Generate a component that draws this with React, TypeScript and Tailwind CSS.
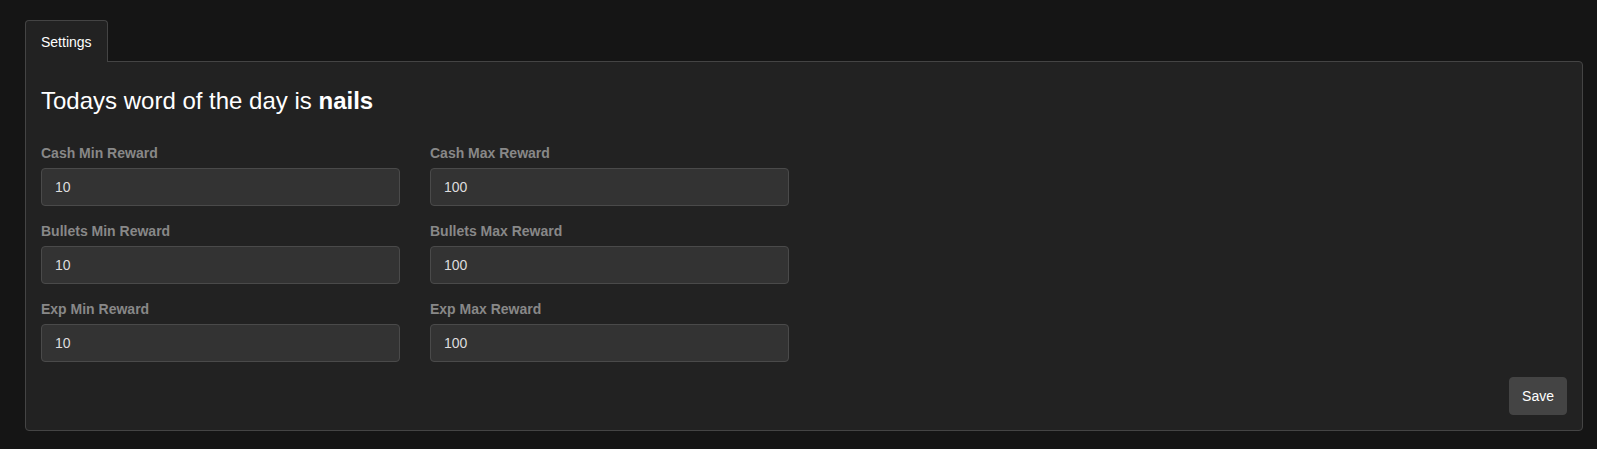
import React from "react";

const fields = [
  ["Cash Min Reward", "10", "Cash Max Reward", "100"],
  ["Bullets Min Reward", "10", "Bullets Max Reward", "100"],
  ["Exp Min Reward", "10", "Exp Max Reward", "100"],
];

function Field({ label, value }: { label: string; value: string }) {
  return (
    <div className="flex flex-col">
      <label className="mb-[5px] text-[14px] font-bold leading-[20px] text-[#888888]">{label}</label>
      <input
        defaultValue={value}
        className="h-[38px] w-full rounded-[4px] border border-[#4a4a4a] bg-[#333333] px-[13px] text-[14px] text-[#dddddd] outline-none"
        style={{ fontFamily: '"Liberation Sans", Arial, sans-serif' }}
      />
    </div>
  );
}

export default function App() {
  return (
    <div
      className="min-h-[449px] w-full bg-[#151515] pl-[25px] pr-[14px] pt-[20px] pb-[18px]"
      style={{ fontFamily: '"Liberation Sans", Arial, sans-serif' }}
    >
      <div className="flex">
        <div className="relative z-10 -mb-px rounded-t-[4px] border border-b-0 border-[#444444] bg-[#222222] px-[15px] pt-[9px] pb-[8px] text-[14px] leading-[24px] text-white">
          Settings
        </div>
      </div>
      <div className="rounded-b-[4px] rounded-tr-[4px] border border-[#444444] bg-[#222222] p-[15px]">
        <h2 className="mt-[9px] mb-[28px] text-[24px] leading-[29px] text-white">
          Todays word of the day is <b>nails</b>
        </h2>
        <div className="grid grid-cols-4 gap-x-[30px] gap-y-[15px]">
          {fields.map((r) => (
            <React.Fragment key={r[0]}>
              <Field label={r[0]} value={r[1]} />
              <Field label={r[2]} value={r[3]} />
              <div />
              <div />
            </React.Fragment>
          ))}
        </div>
        <div className="mt-[15px] flex justify-end">
          <button className="rounded-[4px] border border-[#444444] bg-[#444444] px-[12px] py-[6px] text-[14px] leading-[24px] text-white">
            Save
          </button>
        </div>
      </div>
    </div>
  );
}
